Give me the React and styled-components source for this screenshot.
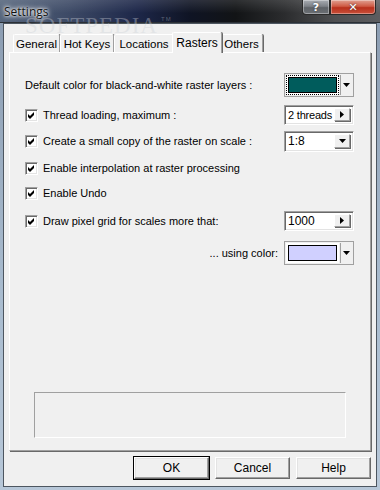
import React from 'react'
import styled, { createGlobalStyle } from 'styled-components';

const Global = createGlobalStyle`
  html, body { margin: 0; padding: 0; background: #6e8aa8; }
  * { box-sizing: border-box; }
`;

const Window = styled.div`
  position: relative;
  width: 380px;
  height: 490px;
  display: flex;
  flex-direction: column;
  overflow: hidden;
  background: linear-gradient(180deg, #8a9bb0 0%, #a9bccf 60%, #b7c7d8 100%);
  font-family: "Liberation Sans", Arial, sans-serif;
  font-size: 11px;
  color: #000;
`;

const TitleBar = styled.div`
  position: relative;
  height: 23px;
  flex-shrink: 0;
  display: flex;
  align-items: flex-start;
  background:
    linear-gradient(180deg, rgba(255,255,255,0.12) 0%, rgba(255,255,255,0) 60%),
    linear-gradient(90deg, #55657c 0%, #3d4a66 18%, #1d2749 36%, #0f1424 50%, #121416 62%, #2b2c2e 75%, #4e4f51 88%, #5c5d60 100%);
  border-bottom: 1px solid #2b3036;
`;

const Title = styled.span`
  margin: 3px 0 0 4px;
  font-family: "Open Sans", "Noto Sans", sans-serif;
  font-size: 12px;
  color: #111;
  text-shadow: 0 0 6px #fff, 0 0 4px #fff, 0 0 2px #fff;
`;

const Watermark = styled.span`
  position: absolute;
  left: 25px;
  top: 8px;
  z-index: 10;
  pointer-events: none;
  font-family: "Liberation Serif", serif;
  font-size: 23px;
  line-height: 23px;
  letter-spacing: 1px;
  color: rgba(205, 208, 215, 0.38);
  sup { font-family: "Liberation Sans", sans-serif; font-size: 6px; vertical-align: 12px; margin-left: 3px; }
`;

const CaptionButtons = styled.div`
  position: absolute;
  top: 0;
  right: 4px;
  display: flex;
`;

const CaptionButton = styled.div`
  width: ${p => p.$w}px;
  height: 15px;
  display: flex;
  align-items: center;
  justify-content: center;
  border: 1px solid #2a2a2a;
  border-top: none;
  border-radius: ${p => p.$close ? '0 0 4px 0' : '0 0 0 4px'};
  background: ${p => p.$close
    ? 'linear-gradient(180deg, #e0a192 0%, #cf5a44 45%, #b8301c 55%, #c9503a 100%)'
    : 'linear-gradient(180deg, #a9adb3 0%, #7d8187 45%, #5f6368 55%, #6b6f74 100%)'};
  box-shadow: inset 0 0 0 1px rgba(255,255,255,0.35);
  color: #fff;
  font-family: "DejaVu Sans", sans-serif;
  font-weight: bold;
  font-size: 11px;
  text-shadow: 0 0 2px #333;
`;

const Client = styled.div`
  flex: 1;
  margin: 0 3px 3px 3px;
  border: 1px solid #4d5660;
  background: #f0f0f0;
  padding: 8px 5px 7px 5px;
  display: flex;
  flex-direction: column;
`;

const TabStrip = styled.div`
  height: 20px;
  display: flex;
  align-items: flex-end;
  padding-left: 4px;
  position: relative;
  z-index: 2;
`;

const Tab = styled.div`
  width: ${p => p.$w}px;
  height: ${p => p.$active ? 21 : 18}px;
  margin: ${p => p.$active ? '0 -2px -1px -2px' : '0'};
  display: flex;
  align-items: center;
  justify-content: center;
  padding-top: ${p => p.$active ? 0 : 1}px;
  background: #f0f0f0;
  border-top: 1px solid #fff;
  border-left: 1px solid #fff;
  border-right: 1px solid #a0a0a0;
  box-shadow: 1px 0 0 #696969;
  border-radius: 2px 2px 0 0;
  position: relative;
  z-index: ${p => p.$active ? 3 : 1};
  font-size: ${p => p.$active ? 12 : 11.5}px;
`;

const Panel = styled.div`
  flex: 1;
  display: flex;
  flex-direction: column;
  padding: 20px 16px 0 15px;
  border-top: 1px solid #fff;
  border-left: 1px solid #fff;
  border-right: 1px solid #a0a0a0;
  border-bottom: 1px solid #a0a0a0;
  box-shadow: 1px 1px 0 #696969;
`;

const Row = styled.div`
  height: ${p => p.$h}px;
  margin-top: ${p => p.$mt}px;
  display: flex;
  align-items: center;
`;

const Label = styled.span`
  flex: 1;
  white-space: nowrap;
  text-align: ${p => p.$right ? 'right' : 'left'};
  padding-right: ${p => p.$right ? 6 : 0}px;
`;

const CheckBox = styled.span`
  width: 13px;
  height: 13px;
  flex-shrink: 0;
  margin-right: 5px;
  background: #fff;
  border-top: 1px solid #a0a0a0;
  border-left: 1px solid #a0a0a0;
  border-right: 1px solid #fff;
  border-bottom: 1px solid #fff;
  box-shadow: inset 1px 1px 0 #696969, inset -1px -1px 0 #e3e3e3;
  display: flex;
  align-items: center;
  justify-content: center;
`;

const Sunken = styled.div`
  width: 70px;
  height: ${p => p.$h}px;
  flex-shrink: 0;
  display: flex;
  align-items: center;
  background: #fff;
  border-top: 1px solid #a0a0a0;
  border-left: 1px solid #a0a0a0;
  border-right: 1px solid #fff;
  border-bottom: 1px solid #fff;
  box-shadow: inset 1px 1px 0 #696969, inset -1px -1px 0 #e3e3e3;
  padding: 2px;
`;

const FieldText = styled.span`
  flex: 1;
  min-width: 0;
  white-space: nowrap;
  overflow: hidden;
  padding-left: 1px;
  font-size: ${p => p.$small ? 11 : 12}px;
  letter-spacing: ${p => p.$small ? '-0.2px' : '0'};
`;

const ArrowBtn = styled.span`
  width: 16px;
  flex-shrink: 0;
  align-self: stretch;
  display: flex;
  align-items: center;
  justify-content: center;
  background: #f0f0f0;
  border-top: 1px solid #fff;
  border-left: 1px solid #fff;
  border-right: 1px solid #a0a0a0;
  border-bottom: 1px solid #a0a0a0;
  box-shadow: 1px 1px 0 #696969;
  margin: 0 1px 1px 0;
`;

const ColorCombo = styled.div`
  width: 70px;
  height: 24px;
  flex-shrink: 0;
  display: flex;
  background: #f0f0f0;
  border: 1px solid #a0a0a0;
  padding: 1px;
`;

const SwatchArea = styled.div`
  flex: 1;
  display: flex;
  padding: 2px;
  background: #fff;
  outline: ${p => p.$focus ? '1px dotted #000' : 'none'};
  outline-offset: -1px;
`;

const Swatch = styled.div`
  flex: 1;
  background: ${p => p.$color};
  border: 1px solid #000;
`;

const ComboArrow = styled.span`
  width: 12px;
  display: flex;
  align-items: center;
  justify-content: center;
  border-left: 1px solid #a0a0a0;
  margin-left: 1px;
  background: #f0f0f0;
`;

const GroupBox = styled.div`
  margin: auto 8px 12px 9px;
  height: 46px;
  border-top: 1px solid #a0a0a0;
  border-left: 1px solid #a0a0a0;
  border-right: 1px solid #fff;
  border-bottom: 1px solid #fff;
`;

const ButtonBar = styled.div`
  margin-top: 6px;
  display: flex;
  justify-content: flex-end;
  gap: 6px;
`;

const Button = styled.button`
  width: 75px;
  height: 22px;
  font-family: "Liberation Sans", Arial, sans-serif;
  font-size: 12px;
  color: #000;
  background: #f0f0f0;
  border-top: 1px solid #fff;
  border-left: 1px solid #fff;
  border-right: 1px solid #696969;
  border-bottom: 1px solid #696969;
  box-shadow: inset -1px -1px 0 #a0a0a0, inset 1px 1px 0 #e3e3e3;
  outline: ${p => p.$default ? '1px solid #000' : 'none'};
  outline-offset: 0;
  padding: 0;
`;

const Check = () => (
  <svg width="9" height="9" viewBox="0 0 9 9">
    <path d="M1 3 L3 5 L7 1 L7 4 L3 8 L1 6 Z" fill="#000" />
  </svg>
);

const Down = () => (
  <svg width="7" height="4" viewBox="0 0 7 4">
    <path d="M0 0 H7 L3.5 4 Z" fill="#000" />
  </svg>
);

const Right = () => (
  <svg width="4" height="7" viewBox="0 0 4 7">
    <path d="M0 0 V7 L4 3.5 Z" fill="#000" />
  </svg>
);

const tabs = [
  { name: 'General', w: 47 },
  { name: 'Hot Keys', w: 54 },
  { name: 'Locations', w: 60 },
  { name: 'Rasters', w: 50, active: true },
  { name: 'Others', w: 43 },
];

const App = () => {
  return (
    <Window>
      <Global />
      <TitleBar>
        <Title>Settings</Title>
        <CaptionButtons>
          <CaptionButton $w={28}>?</CaptionButton>
          <CaptionButton $w={46} $close>✕</CaptionButton>
        </CaptionButtons>
      </TitleBar>
      <Watermark>SOFTPEDIA<sup>TM</sup></Watermark>
      <Client>
        <TabStrip>
          {tabs.map(t => (
            <Tab key={t.name} $w={t.w} $active={t.active}>{t.name}</Tab>
          ))}
        </TabStrip>
        <Panel>
          <Row $h={24} $mt={0}>
            <Label>Default color for black-and-white raster layers :</Label>
            <ColorCombo>
              <SwatchArea $focus><Swatch $color="#005c5c" /></SwatchArea>
              <ComboArrow><Down /></ComboArrow>
            </ColorCombo>
          </Row>
          <Row $h={20} $mt={8}>
            <CheckBox><Check /></CheckBox>
            <Label>Thread loading, maximum :</Label>
            <Sunken $h={20}>
              <FieldText $small>2 threads</FieldText>
              <ArrowBtn><Right /></ArrowBtn>
            </Sunken>
          </Row>
          <Row $h={20} $mt={6}>
            <CheckBox><Check /></CheckBox>
            <Label>Create a small copy of the raster on scale :</Label>
            <Sunken $h={21}>
              <FieldText>1:8</FieldText>
              <ArrowBtn><Down /></ArrowBtn>
            </Sunken>
          </Row>
          <Row $h={20} $mt={7}>
            <CheckBox><Check /></CheckBox>
            <Label>Enable interpolation at raster processing</Label>
          </Row>
          <Row $h={20} $mt={5}>
            <CheckBox><Check /></CheckBox>
            <Label>Enable Undo</Label>
          </Row>
          <Row $h={20} $mt={8}>
            <CheckBox><Check /></CheckBox>
            <Label>Draw pixel grid for scales more that:</Label>
            <Sunken $h={20}>
              <FieldText>1000</FieldText>
              <ArrowBtn><Right /></ArrowBtn>
            </Sunken>
          </Row>
          <Row $h={24} $mt={10}>
            <Label $right>... using color:</Label>
            <ColorCombo>
              <SwatchArea><Swatch $color="#d0d0ff" /></SwatchArea>
              <ComboArrow><Down /></ComboArrow>
            </ColorCombo>
          </Row>
          <GroupBox />
        </Panel>
        <ButtonBar>
          <Button $default>OK</Button>
          <Button>Cancel</Button>
          <Button>Help</Button>
        </ButtonBar>
      </Client>
    </Window>
  )
}

export default App
